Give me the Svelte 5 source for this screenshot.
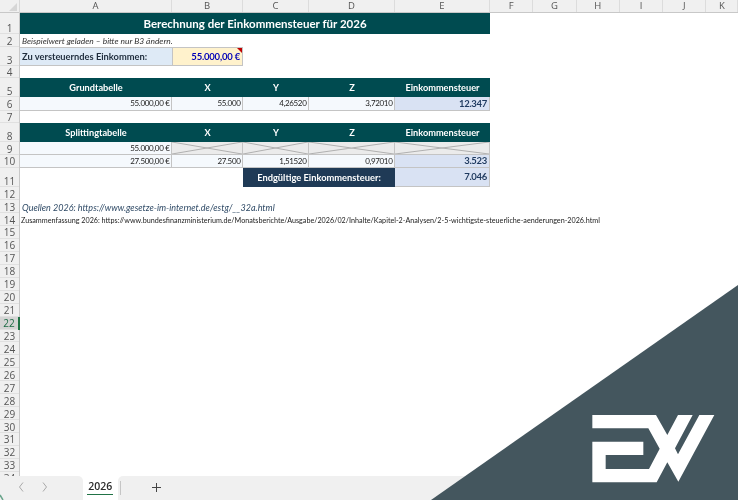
<script>
  const columns = ['A', 'B', 'C', 'D', 'E', 'F', 'G', 'H', 'I', 'J', 'K'];
  const rowHeights = [21, 13, 19, 12, 19, 13.5, 12.5, 19, 13, 12.5, 19.5, 13, 13, 13];
  const rows = Array.from({ length: 34 }, (_, i) => ({ n: i + 1, h: rowHeights[i] ?? 12.95 }));
</script>

{#snippet cross()}
  <div class="c x">
    <svg viewBox="0 0 100 100" preserveAspectRatio="none">
      <path d="M0 0 100 100M0 100 100 0" vector-effect="non-scaling-stroke" />
    </svg>
  </div>
{/snippet}

<div class="app">
  <div class="colhead">
    <div class="corner"><span class="tri"></span></div>
    {#each columns as c}<div class="col">{c}</div>{/each}
  </div>

  <div class="main">
    <div class="rowhead">
      {#each rows as r}
        <div class="rn" class:sel={r.n === 22} style="height:{r.h}px">{r.n}</div>
      {/each}
    </div>

    <div class="sheet">
      <div class="line h21"><div class="c title s5">Berechnung der Einkommensteuer für 2026</div></div>
      <div class="line h13"><div class="c note s5">Beispielwert geladen – bitte nur B3 ändern.</div></div>
      <div class="line h19">
        <div class="c label">Zu versteuerndes Einkommen:</div>
        <div class="c input">55.000,00 €<span class="flag"></span></div>
      </div>
      <div class="line h12"></div>

      <div class="line h19">
        <div class="c th">Grundtabelle</div><div class="c th">X</div><div class="c th">Y</div><div class="c th">Z</div><div class="c th">Einkommensteuer</div>
      </div>
      <div class="line h135">
        <div class="c num">55.000,00 €</div><div class="c num">55.000</div><div class="c num">4,26520</div><div class="c num">3,72010</div><div class="c res">12.347</div>
      </div>
      <div class="line h125"></div>

      <div class="line h19">
        <div class="c th">Splittingtabelle</div><div class="c th">X</div><div class="c th">Y</div><div class="c th">Z</div><div class="c th">Einkommensteuer</div>
      </div>
      <div class="line h13">
        <div class="c num">55.000,00 €</div>
        {@render cross()}{@render cross()}{@render cross()}{@render cross()}
      </div>
      <div class="line h125">
        <div class="c num">27.500,00 €</div><div class="c num">27.500</div><div class="c num">1,51520</div><div class="c num">0,97010</div><div class="c res">3.523</div>
      </div>
      <div class="line h195">
        <div class="s2"></div>
        <div class="c final s2">Endgültige Einkommensteuer:</div>
        <div class="c res">7.046</div>
      </div>
      <div class="line h13"></div>
      <div class="line h13"><div class="c source s5">Quellen 2026: https://www.gesetze-im-internet.de/estg/__32a.html</div></div>
      <div class="line h13"><div class="c plain s5">Zusammenfassung 2026: https://www.bundesfinanzministerium.de/Monatsberichte/Ausgabe/2026/02/Inhalte/Kapitel-2-Analysen/2-5-wichtigste-steuerliche-aenderungen-2026.html</div></div>
    </div>
  </div>

  <div class="tabs">
    <div class="tabs-left">
      <svg class="nav" width="40" height="12" viewBox="0 0 40 12"><path d="M4 1.500 0.500 6 4 10.500M24 1.500 27.500 6 24 10.500" fill="none" stroke="#a9a9a9" stroke-width="1"/></svg>
    </div>
    <div class="tab"><span>2026</span></div>
    <div class="tabs-right">
      <span class="sep"></span>
      <svg class="plus" width="9" height="9" viewBox="0 0 9 9"><path d="M4.500 0v9M0 4.500h9" stroke="#444" stroke-width="1"/></svg>
    </div>
  </div>

  <svg class="overlay" width="738" height="500" viewBox="0 0 738 500">
    <path d="M0 495 3 500" stroke="#6aa58c" stroke-width="1.500" fill="none" />
    <polygon points="431,500 738,285 738,500" fill="#44565e" />
    <g transform="translate(560 390) scale(0.33333)">
      <polygon fill="#fff" points="97,75 288,75 322,135 354,75 398,75 345,175 354,193 418,75 463,75 355,275 322,217 290,277 97,277 97,155 250,155 250,195 137,195 137,237 267,237 299,176 265,115 97,115" />
    </g>
  </svg>
</div>

<style>
  :global(body) { margin: 0; background: #fff; }
  .app {
    position: relative;
    width: 738px;
    height: 500px;
    overflow: hidden;
    display: flex;
    flex-direction: column;
    background: #fff;
    font-family: Lato, "Liberation Sans", sans-serif;
    color: #222;
    filter: blur(0.3px);
  }

  .colhead {
    flex: none;
    height: 13px;
    display: grid;
    grid-template-columns: 20px 152px 71px 66px 86px 95px 43.3px 43.3px 43.3px 43.3px 43.3px 32px;
    background: #f0f0f0;
    box-shadow: inset 0 -1px 0 #c8c8c8;
    font: 9.5px/12px "Open Sans", sans-serif;
    color: #555;
  }
  .corner { position: relative; border-right: 1px solid #d8d8d8; box-sizing: border-box; }
  .tri {
    position: absolute;
    right: 2px;
    bottom: 2px;
    border-left: 8px solid transparent;
    border-bottom: 8px solid #d6d6d6;
  }
  .col {
    text-align: center;
    border-right: 1px solid #dcdcdc;
    box-sizing: border-box;
    height: 12px;
  }

  .main { flex: 1; min-height: 0; display: flex; overflow: hidden; }
  .rowhead {
    flex: none;
    width: 20px;
    background: #f0f0f0;
    box-sizing: border-box;
    border-right: 1px solid #c8c8c8;
  }
  .rn {
    box-sizing: border-box;
    display: flex;
    align-items: flex-end;
    justify-content: center;
    padding-bottom: 0.500px;
    font: 10px/11px "Open Sans", sans-serif;
    color: #555;
    box-shadow: inset 0 -1px 0 #e0e0e0;
  }
  .rn.sel {
    background: #d4d4d4;
    color: #1d6b45;
    margin-right: -1px;
    border-right: 2px solid #217346;
  }

  .sheet { flex: 1; min-width: 0; }
  .line {
    display: grid;
    grid-template-columns: 152px 71px 66px 86px 95px;
  }
  .h21 { height: 21px; }
  .h19 { height: 19px; }
  .h13 { height: 13px; }
  .h12 { height: 12px; }
  .h135 { height: 13.500px; }
  .h125 { height: 12.500px; }
  .h195 { height: 19.500px; }
  .s2 { grid-column: span 2; }
  .s5 { grid-column: span 5; }

  .c {
    box-sizing: border-box;
    display: flex;
    align-items: center;
    white-space: nowrap;
    min-width: 0;
  }
  .title {
    justify-content: center;
    background: #004b50;
    color: #fff;
    font-weight: 700;
    font-size: 11.500px;
  }
  .note { padding-left: 2px; font-style: italic; font-size: 8.450px; color: #333; }
  .label {
    padding-left: 2px;
    background: #deeaf6;
    border: 1px solid #c4c4c4;
    border-width: 1px 0 1px 0;
    font-weight: 700;
    font-size: 9.300px;
    color: #1f2d3d;
  }
  .input {
    position: relative;
    justify-content: flex-end;
    padding-right: 2px;
    background: #fff2cc;
    border: 1px solid #c4c4c4;
    font-weight: 700;
    font-size: 9.500px;
    letter-spacing: -0.2px;
    color: #0000b8;
  }
  .flag {
    position: absolute;
    top: 0;
    right: 0;
    border-top: 5px solid #c00000;
    border-left: 5px solid transparent;
  }
  .th {
    justify-content: center;
    background: #004b50;
    color: #fff;
    font-weight: 700;
    font-size: 9.200px;
  }
  .num {
    justify-content: flex-end;
    padding-right: 1.500px;
    background: #f5f9fd;
    border: 1px solid #c4c4c4;
    border-width: 0 1px 1px 0;
    font-size: 8px;
    letter-spacing: -0.33px;
    color: #222;
  }
  .res {
    justify-content: flex-end;
    padding-right: 2px;
    background: #d9e2f3;
    border: 1px solid #c4c4c4;
    border-width: 0 1px 1px 0;
    font-weight: 700;
    font-size: 9.500px;
    letter-spacing: -0.3px;
    color: #1f3a5f;
  }
  .x {
    position: relative;
    border: 1px solid #c4c4c4;
    border-width: 0 1px 1px 0;
    background: #ebebeb;
  }
  .x svg { position: absolute; inset: 0; width: 100%; height: 100%; display: block; }
  .x path { stroke: #b0b0b0; stroke-width: 1; fill: none; }
  .final {
    justify-content: center;
    background: #1f3a56;
    color: #fff;
    font-weight: 700;
    font-size: 9.300px;
  }
  .source { padding: 1px 0 0 2px; font-style: italic; font-size: 9px; color: #2f4a66; }
  .plain { padding: 1px 0 0 1px; font-size: 7.200px; color: #222; }

  .tabs {
    flex: none;
    height: 24px;
    display: flex;
    background: #fff;
  }
  .tabs-left {
    width: 83px;
    background: #f0f0f0;
    border-top-right-radius: 5px;
  }
  .nav { display: block; margin: 5px 0 0 19px; }
  .tab {
    width: 34.500px;
    height: 21px;
    box-sizing: border-box;
    background: #fff;
    border-radius: 0 0 3px 3px;
    text-align: center;
    font: 600 10.500px/13px "Open Sans", sans-serif;
    color: #2b2b2b;
    padding-top: 4px;
  }
  .tab span { display: inline-block; border-bottom: 1.500px solid #217346; padding: 0 1px 1px; }
  .tabs-right {
    flex: 1;
    display: flex;
    align-items: flex-start;
    background: #f0f0f0;
    border-top-left-radius: 5px;
  }
  .sep { width: 1px; height: 14px; margin: 5px 0 0 2px; background: #c6c6c6; }
  .plus { margin: 7px 0 0 31px; }

  .overlay { position: absolute; left: 0; top: 0; pointer-events: none; }
</style>
